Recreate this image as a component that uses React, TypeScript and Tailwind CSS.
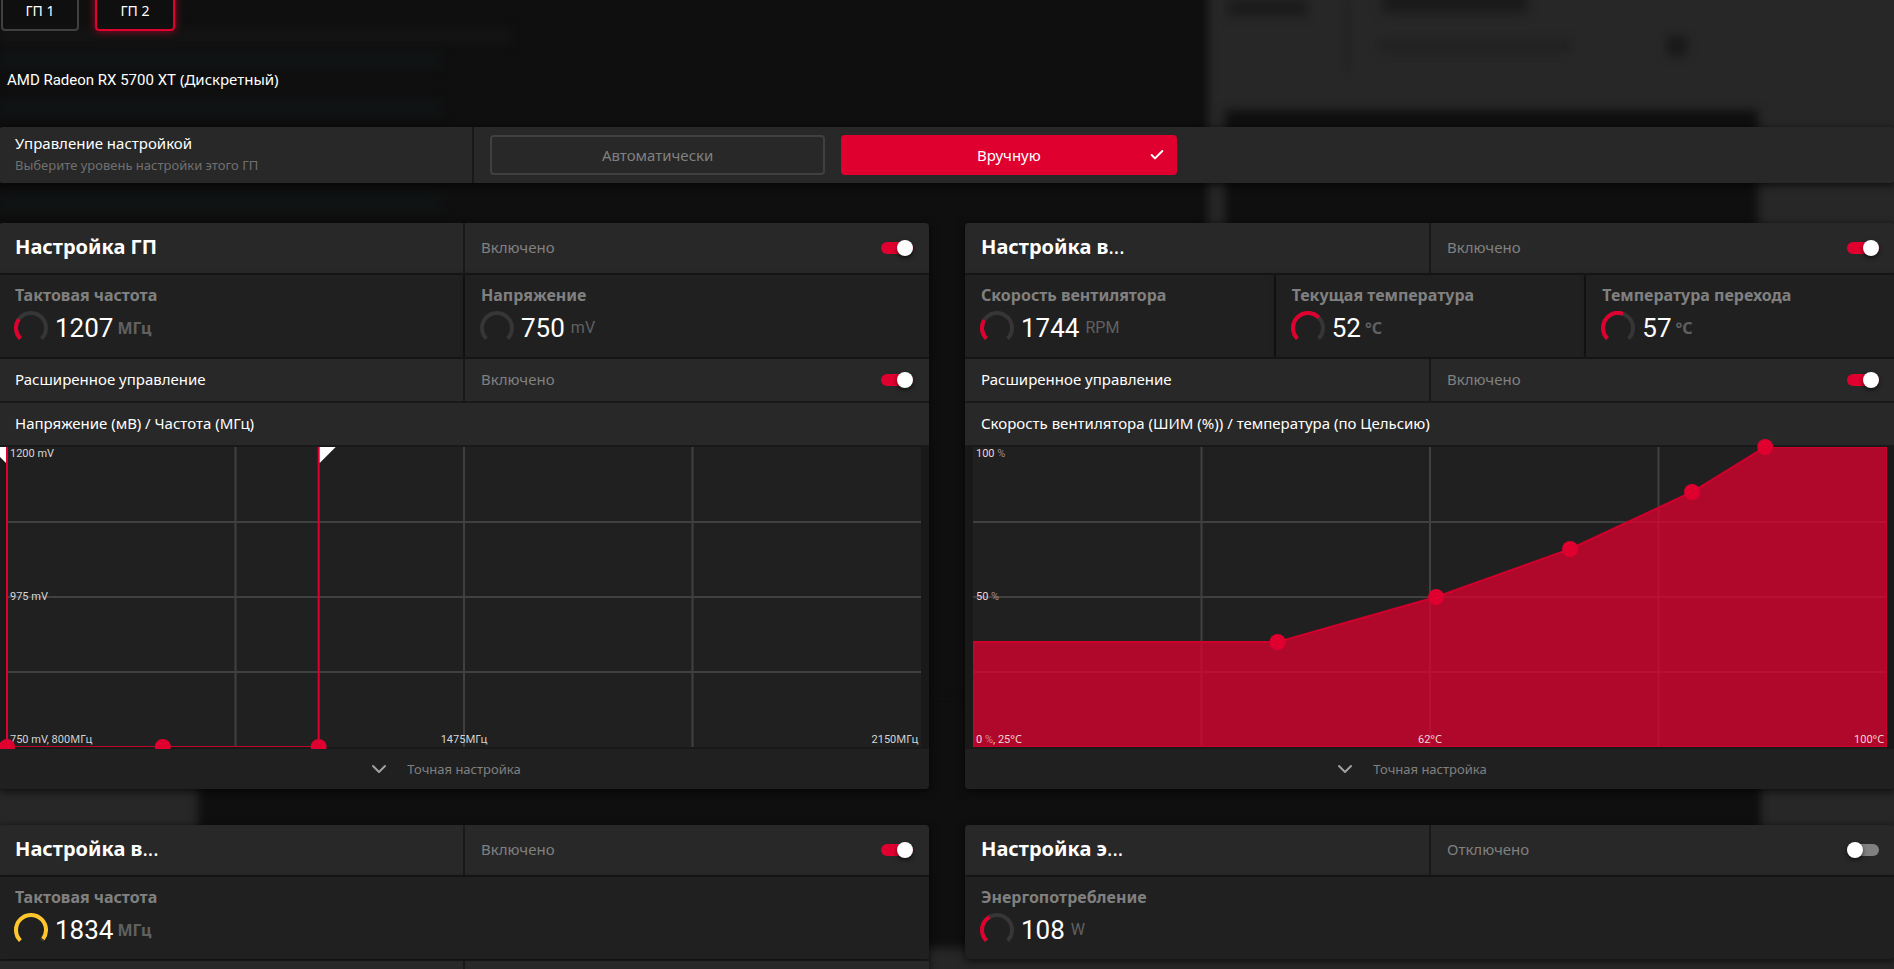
import type { ReactNode } from "react";
import { Check, ChevronDown } from "lucide-react";

interface Metric {
	label: string;
	value: string;
	unit: string;
	level: number;
	boldUnit?: boolean;
	warm?: boolean;
}

interface Point {
	x: number;
	y: number;
}

interface ChartProps {
	title: string;
	yTop: ReactNode;
	yMiddle: ReactNode;
	origin: ReactNode;
	xMiddle: ReactNode;
	xEnd: ReactNode;
	points: Point[];
	filled?: boolean;
	range?: number[];
}

const gpuMetrics: Metric[] = [
	{ label: "Тактовая частота", value: "1207", unit: "МГц", level: 0.3, boldUnit: true },
	{ label: "Напряжение", value: "750", unit: "mV", level: 0 },
];

const fanMetrics: Metric[] = [
	{ label: "Скорость вентилятора", value: "1744", unit: "RPM", level: 0.28 },
	{ label: "Текущая температура", value: "52", unit: "°C", level: 0.67, boldUnit: true },
	{ label: "Температура перехода", value: "57", unit: "°C", level: 0.57, boldUnit: true },
];

const memoryMetrics: Metric[] = [
	{ label: "Тактовая частота", value: "1834", unit: "МГц", level: 0.97, boldUnit: true, warm: true },
];

const powerMetrics: Metric[] = [
	{ label: "Энергопотребление", value: "108", unit: "W", level: 0.39 },
];

// Points are percentages of the plot, measured from its bottom left corner
const voltageCurve: Point[] = [
	{ x: 0, y: 0 },
	{ x: 17.05, y: 0 },
	{ x: 34.1, y: 0 },
];

const fanCurve: Point[] = [
	{ x: 33.33, y: 35 },
	{ x: 50.67, y: 50 },
	{ x: 65.33, y: 66 },
	{ x: 78.67, y: 85 },
	{ x: 86.67, y: 100 },
];

function Backdrop() {
	return (
		<div className="absolute inset-0 -z-10 overflow-hidden" aria-hidden="true">
			<div className="absolute -top-10 -right-10 bottom-0 left-[63.8%] bg-[#272727] blur-[5px]" />
			<div className="absolute top-[110px] right-[7.2%] bottom-0 left-[64.7%] bg-[#0f0f0f] blur-[5px]" />
			<div className="absolute top-[700px] -left-10 h-[300px] w-72 bg-[#272727] blur-[5px]" />
			<div className="absolute top-[700px] right-[7.2%] bottom-0 left-[198px] bg-[#0f0f0f] blur-[5px]" />
			<div className="absolute top-[948px] -right-10 -left-10 h-20 bg-[#272727] blur-[5px]" />
			<div className="absolute top-0 left-[64.8%] h-4 w-20 bg-[#1b1b1b] blur-[5px]" />
			<div className="absolute -top-2 left-[73%] h-5 w-36 bg-[#191919] blur-[6px]" />
			<div className="absolute top-10 left-[72.8%] h-3 w-48 bg-[#212121] blur-[5px]" />
			<div className="absolute top-9 left-[88%] h-5 w-5 bg-[#191919] blur-[5px]" />
			<div className="absolute top-0 left-[71%] h-18 w-1 bg-[#212121] blur-[3px]" />
			<div className="absolute top-7 left-0 h-4 w-[510px] bg-[#141414] blur-[5px]" />
			<div className="absolute top-13 left-0 h-4 w-[440px] bg-[#101415] blur-[5px]" />
			<div className="absolute top-[100px] left-0 h-4 w-[440px] bg-[#101415] blur-[5px]" />
			<div className="absolute top-[195px] left-0 h-4 w-[440px] bg-[#101415] blur-[5px]" />
		</div>
	);
}

function Toggle({ id, on }: { id: string; on: boolean }) {
	return (
		<input
			id={id}
			type="checkbox"
			role="switch"
			defaultChecked={on}
			className="relative h-4 w-8 shrink-0 cursor-pointer appearance-none before:absolute before:inset-x-0 before:top-[2px] before:h-3 before:rounded-full before:bg-[#808080] checked:before:bg-[#e0002f] after:absolute after:top-0 after:left-0 after:size-4 after:rounded-full after:bg-white after:shadow-[0_2px_4px_rgba(0,0,0,0.6)] checked:after:left-4"
		/>
	);
}

function ToggleRow({ id, on, tall, children }: { id: string; on: boolean; tall?: boolean; children: ReactNode }) {
	const height = tall ? "h-[50px]" : "h-[42px]";
	return (
		<div className="grid grid-cols-2 gap-0.5">
			<div className={`flex items-center bg-[#282828] px-4 pb-0.5 ${height}`}>{children}</div>
			<div className={`flex items-center justify-between bg-[#282828] px-4 ${height}`}>
				<label htmlFor={id} className="pb-0.5 text-[#808080]">{on ? "Включено" : "Отключено"}</label>
				<Toggle id={id} on={on} />
			</div>
		</div>
	);
}

function Title({ text, cut }: { text: string; cut?: boolean }) {
	return (
		<h2 className="text-xl font-bold">
			{text}
			{cut && <span className="font-normal">...</span>}
		</h2>
	);
}

function Gauge({ level, warm }: { level: number; warm?: boolean }) {
	const arc = "M20.4 41.6 A15 15 0 1 1 41.6 41.6";
	return (
		<svg viewBox="14 14 34 34" className="size-[34px] shrink-0" fill="none" strokeWidth="4">
			<path d={arc} stroke="#363636" />
			{level > 0 && (
				<path d={arc} stroke={warm ? "#ffc72c" : "#e0002f"} pathLength={100} strokeDasharray={`${level * 100} 200`} />
			)}
		</svg>
	);
}

function MetricCell({ metric }: { metric: Metric }) {
	return (
		<div className="h-[82px] bg-[#202020] px-4 pt-2 text-base leading-6 shadow-[0_0_4px_rgba(0,0,0,0.5)]">
			<div className="font-bold text-[#808080]">{metric.label}</div>
			<div className="mt-1 -ml-px flex items-center gap-[7px]">
				<Gauge level={metric.level} warm={metric.warm} />
				<div className="flex items-center gap-1">
					<span className="font-[Roboto] text-[26px] leading-[34px]">{metric.value}</span>
					<span className={metric.boldUnit ? "font-bold text-[#606060]" : "px-0.5 font-[Roboto] text-[#606060]"}>{metric.unit}</span>
				</div>
			</div>
		</div>
	);
}

function Chart({ title, yTop, yMiddle, origin, xMiddle, xEnd, points, filled, range = [] }: ChartProps) {
	const first = points[0];
	const last = points[points.length - 1];
	const line = points.map((p) => `${p.x},${100 - p.y}`).join(" ");
	const area = `0,100 0,${100 - first.y} ${line} 100,${100 - last.y} 100,100`;

	return (
		<>
			<h3 className="flex h-[42px] items-center bg-[#282828] px-4 pb-0.5">{title}</h3>
			<div className="px-2">
				<svg className="block h-[300px] w-full overflow-visible bg-[#202020]">
					{/* Grid */}
					{["25%", "50%", "75%"].map((at) => (
						<g key={at} stroke="#404040" strokeWidth="2">
							<line x1={at} x2={at} y1="0" y2="100%" />
							<line x1="0" x2="100%" y1={at} y2={at} />
						</g>
					))}

					{/* Curve */}
					<svg viewBox="0 0 100 100" preserveAspectRatio="none" width="100%" height="100%">
						{filled ? (
							<polygon points={area} fill="#e0002f" fillOpacity="0.75" stroke="#d0002c" strokeWidth="2" vectorEffect="non-scaling-stroke" />
						) : (
							<polyline points={line} fill="none" stroke="#c0042b" strokeWidth="2" vectorEffect="non-scaling-stroke" />
						)}
					</svg>

					{/* Axis labels */}
					<g className="font-[Roboto] text-[11px]" fill={filled ? "#f0d4da" : "#d6d6d6"}>
						<text x="3" y="10">{yTop}</text>
						<text x="3" y="153">{yMiddle}</text>
						<text x="3" y="296">{origin}</text>
						<text x="50%" y="296" textAnchor="middle">{xMiddle}</text>
						<text x="99.7%" y="296" textAnchor="end">{xEnd}</text>
					</g>

					{/* Range limits with their flags */}
					{range.map((at, index) => (
						<svg key={at} x={`${at}%`} overflow="visible">
							<line x1="0" x2="0" y1="0" y2="300" stroke="#e0002f" strokeWidth="2" />
							<path d={index === 0 ? "M-1 0 V16 L-17 0 Z" : "M1 0 V16 L17 0 Z"} fill="#ffffff" />
						</svg>
					))}
					{points.map((p) => (
						<circle key={p.x} cx={`${p.x}%`} cy={`${100 - p.y}%`} r="8" fill="#e0002f" />
					))}
				</svg>
			</div>
			<button type="button" className="relative flex h-10 w-full cursor-pointer items-center justify-center gap-4 bg-[#202020] pr-10 text-[13px] text-[#808080]">
				<ChevronDown className="size-6 text-[#a0a0a0]" strokeWidth={2} />
				Точная настройка
			</button>
		</>
	);
}

function Card({ children }: { children: ReactNode }) {
	return (
		<section className="flex flex-col gap-0.5 self-start overflow-hidden rounded bg-[#191919] shadow-[0_2px_8px_rgba(0,0,0,0.7)]">
			{children}
		</section>
	);
}

function Percent({ value }: { value: string }) {
	return (
		<>
			{value} <tspan fillOpacity="0.6">%</tspan>
		</>
	);
}

function WithUnit({ value, unit }: { value: string; unit: string }) {
	return (
		<>
			{value}
			<tspan className="font-['Noto_Sans']">{unit}</tspan>
		</>
	);
}

export default function App() {
	return (
		<main className="relative isolate h-screen overflow-hidden bg-[#0f0f0f] font-['Noto_Sans',sans-serif] text-[15px] leading-6 text-white">
			<Backdrop />

			<div className="-mx-px">
				{/* GPU tabs */}
				<nav className="-mt-[9px] flex gap-4 px-0.5">
					<button type="button" className="h-10 w-[78px] rounded border-2 border-[#404040] text-sm">ГП 1</button>
					<button type="button" className="h-10 w-20 rounded border-2 border-[#e0002f] text-sm shadow-[0_0_8px_rgba(224,0,47,0.7)]">ГП 2</button>
				</nav>
				<h1 className="mt-9 h-6 px-2">
					<span className="font-[Roboto]">AMD Radeon RX 5700 XT</span> (Дискретный)
				</h1>

				{/* Tuning control */}
				<section className="mt-9 grid grid-cols-[calc(25%-1px)_1fr] gap-0.5 overflow-hidden rounded bg-[#191919] shadow-[0_2px_8px_rgba(0,0,0,0.7)]">
					<div className="flex h-14 flex-col justify-center bg-[#282828] px-4">
						<div className="leading-5">Управление настройкой</div>
						<div className="text-[13px] leading-6 text-[#707070]">Выберите уровень настройки этого ГП</div>
					</div>
					<div className="grid h-14 grid-cols-4 items-center gap-4 bg-[#282828] px-4">
						<button type="button" className="h-10 rounded border-2 border-[#404040] text-[#808080]">Автоматически</button>
						<button type="button" className="relative h-10 rounded bg-[#e0002f]">
							Вручную
							<Check className="absolute top-3 right-3 size-4" strokeWidth={3} />
						</button>
					</div>
				</section>

				<div className="mt-10 grid grid-cols-2 gap-9">
					<Card>
						<ToggleRow id="gpu" on tall>
							<Title text="Настройка ГП" />
						</ToggleRow>
						<div className="grid grid-cols-2 gap-0.5">
							{gpuMetrics.map((metric) => (
								<MetricCell key={metric.label} metric={metric} />
							))}
						</div>
						<ToggleRow id="gpu-advanced" on>Расширенное управление</ToggleRow>
						<Chart
							title="Напряжение (мВ) / Частота (МГц)"
							yTop="1200 mV"
							yMiddle="975 mV"
							origin={<WithUnit value="750 mV, 800" unit="МГц" />}
							xMiddle={<WithUnit value="1475" unit="МГц" />}
							xEnd={<WithUnit value="2150" unit="МГц" />}
							points={voltageCurve}
							range={[0, 34.1]}
						/>
					</Card>

					<Card>
						<ToggleRow id="fan" on tall>
							<Title text="Настройка в" cut />
						</ToggleRow>
						<div className="grid grid-cols-3 gap-0.5">
							{fanMetrics.map((metric) => (
								<MetricCell key={metric.label} metric={metric} />
							))}
						</div>
						<ToggleRow id="fan-advanced" on>Расширенное управление</ToggleRow>
						<Chart
							title="Скорость вентилятора (ШИМ (%)) / температура (по Цельсию)"
							yTop={<Percent value="100" />}
							yMiddle={<Percent value="50" />}
							origin={<><Percent value="0" /><WithUnit value=", 25" unit="°C" /></>}
							xMiddle={<WithUnit value="62" unit="°C" />}
							xEnd={<WithUnit value="100" unit="°C" />}
							points={fanCurve}
							filled
						/>
					</Card>

					<Card>
						<ToggleRow id="memory" on tall>
							<Title text="Настройка в" cut />
						</ToggleRow>
						<MetricCell metric={memoryMetrics[0]} />
						<div className="grid grid-cols-2 gap-0.5">
							<div className="h-[42px] bg-[#282828]" />
							<div className="h-[42px] bg-[#282828]" />
						</div>
					</Card>

					<Card>
						<ToggleRow id="power" on={false} tall>
							<Title text="Настройка э" cut />
						</ToggleRow>
						<MetricCell metric={powerMetrics[0]} />
					</Card>
				</div>
			</div>
		</main>
	);
}
